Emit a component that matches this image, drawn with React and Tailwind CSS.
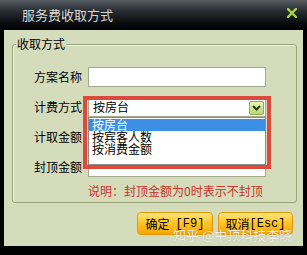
import React from "react";

const font = "font-['Noto_Sans_CJK_SC','Noto_Sans',sans-serif]";

function Field({ label, children }) {
  return (
    <div className="flex items-center h-[20px]">
      <div className="w-[54px] text-[12px] leading-[14px] text-black">{label}</div>
      {children}
    </div>
  );
}

function Input() {
  return <div className="w-[178px] h-[20px] bg-white border border-[#a3ab8c]" />;
}

export default function App() {
  return (
    <div className={`w-[307px] h-[255px] bg-black relative overflow-hidden ${font}`}>
      {/* Title bar */}
      <div className="h-[30px] flex items-center justify-between pl-[22px] pr-[10px] bg-[linear-gradient(to_bottom,#585e64_0%,#2a2f34_35%,#0b0d0f_75%,#000_100%)]">
        <span className="text-[13px] leading-[16px] text-[#d8d8d8]">服务费收取方式</span>
        <svg width="10" height="10" viewBox="0 0 10 10" className="mb-[4px]">
          <path d="M1 1 L9 9 M9 1 L1 9" stroke="#a6d44a" strokeWidth="2.4" strokeLinecap="square" />
        </svg>
      </div>

      {/* Body */}
      <div className="mx-[4px] h-[216px] bg-[#d4dcbc] pt-[14px] pl-[8px] pr-[6px] flex flex-col">
        <div className="relative h-[159px] border border-[#98a57a] rounded-[3px] pt-[22px] pl-[21px] shadow-[inset_1px_1px_0_#eef2e0]">
          <div className="absolute -top-[8px] left-[3px] px-[1px] bg-[#d4dcbc] text-[12px] leading-[14px] text-black">
            收取方式
          </div>
          <div className="flex flex-col gap-[10px]">
            <Field label="方案名称">
              <Input />
            </Field>
            <Field label="计费方式">
              <div className="relative w-[178px] h-[20px] bg-white border border-[#a3ab8c] flex items-center pl-[4px]">
                <span className="text-[12px] leading-[14px] text-black">按房台</span>
                <div className="absolute right-[1px] top-[3px] w-[15px] h-[14px] rounded-[2px] border border-[#8fa85a] bg-[linear-gradient(to_bottom,#e6f5b4,#b9d873)] flex items-center justify-center">
                  <svg width="9" height="6" viewBox="0 0 9 6">
                    <path d="M1 1 L4.5 4.5 L8 1" stroke="#2d3a10" strokeWidth="2" fill="none" />
                  </svg>
                </div>
                <div className="absolute left-[-1px] top-[19px] w-[178px] h-[48px] bg-white border border-[#8a8a8a] z-10 flex flex-col pt-[1px]">
                  <div className="h-[12px] bg-[#3b8fe4] text-white text-[12px] leading-[12px] pl-[3px]">按房台</div>
                  <div className="h-[12px] text-black text-[12px] leading-[12px] pl-[3px]">按宾客人数</div>
                  <div className="h-[12px] text-black text-[12px] leading-[12px] pl-[3px]">按消费金额</div>
                </div>
              </div>
            </Field>
            <Field label="计取金额">
              <Input />
            </Field>
            <Field label="封顶金额">
              <Input />
            </Field>
          </div>
          <div className="mt-[7px] pl-[54px] text-[12px] leading-[14px] text-[#c8322a] whitespace-nowrap">
            说明：封顶金额为0时表示不封顶
          </div>
        </div>

        <div className="flex justify-end gap-[5px] mt-[9px] pr-[4px]">
          <button className="w-[76px] h-[23px] rounded-[4px] border border-[#e39a0a] bg-[linear-gradient(to_bottom,#ffe47e_0%,#ffc72a_45%,#f7a500_100%)] text-[12px] leading-[14px] text-black flex items-center justify-center gap-[6px]">
            <span>确定</span>
            <span className="font-['Liberation_Mono',monospace]">[F9]</span>
          </button>
          <button className="w-[75px] h-[23px] rounded-[4px] border border-[#e39a0a] bg-[linear-gradient(to_bottom,#ffe47e_0%,#ffc72a_45%,#f7a500_100%)] text-[12px] leading-[14px] text-black flex items-center justify-center">
            <span>取消</span>
            <span className="font-['Liberation_Mono',monospace]">[Esc]</span>
          </button>
        </div>
      </div>

      {/* Red annotation frame */}
      <div className="absolute left-[83px] top-[96px] w-[188px] h-[73px] border-[4px] border-[#dc4a3e] z-20 pointer-events-none" />

      {/* Watermark */}
      <div className="absolute left-[173px] top-[227px] text-[13px] leading-[16px] text-white/85 whitespace-nowrap z-30 [text-shadow:0_0_1px_rgba(0,0,0,0.3)]">
        知乎 @中顶科技李晓
      </div>
    </div>
  );
}
